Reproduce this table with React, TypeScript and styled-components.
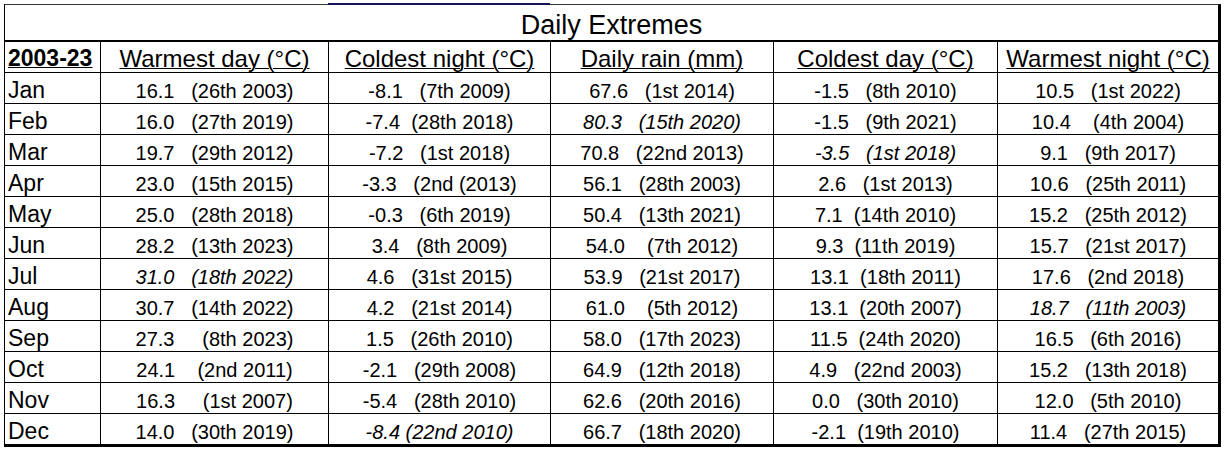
import React from 'react';
import styled, {createGlobalStyle} from "styled-components";

const GlobalStyle = createGlobalStyle`
    body {
        margin: 0;
        background: #fff;
        color: #000;
        font-family: "Liberation Sans", Arial, sans-serif;
    }
`

const TableStyled = styled.div`
    display: grid;
    grid-template-columns: 95px 228px 222px 223px 224px 221px;
    width: 1217px;
    margin: 4px 0 0 4px;
    box-sizing: border-box;
    border-left: 1px solid #000;
    border-top: 1px solid #333;
    border-right: 3px solid #000;
    border-bottom: 2px solid #000;
`
const TitleCell = styled.div`
    grid-column: 1 / -1;
    position: relative;
    height: 37px;
    box-sizing: border-box;
    border-bottom: 2px solid #000;
    padding-top: 2px;
    font-size: 27px;
    line-height: 36px;
    text-align: center;

    // the dark blue strip sitting on the top edge
    &::before {
        content: "";
        position: absolute;
        top: -2px;
        left: 323px;
        width: 222px;
        height: 2px;
        background: #14145a;
    }
`
const Cell = styled.div<{ $first?: boolean }>`
    height: 31px;
    box-sizing: border-box;
    border-bottom: 1px solid #000;
    border-left: ${({$first}) => ($first ? "none" : "1px solid #000")};
    overflow: hidden;
`
const HeadCell = styled(Cell)`
    line-height: 31px;
    padding-top: 1px;
    text-align: ${({$first}) => ($first ? "left" : "center")};
    padding-left: ${({$first}) => ($first ? "3px" : "0")};
    font-size: ${({$first}) => ($first ? "23px" : "24px")};
    font-weight: ${({$first}) => ($first ? 700 : 400)};

    span {
        text-decoration: underline;
        text-decoration-thickness: 1px;
    }
`
const MonthCell = styled(Cell)`
    font-size: 23px;
    line-height: 31px;
    padding: 2px 0 0 3px;
`
const ValueCell = styled(Cell)<{ $italic?: boolean }>`
    font-size: 20px;
    line-height: 31px;
    padding-top: 3px;
    text-align: center;
    white-space: pre;
    font-style: ${({$italic}) => ($italic ? "italic" : "normal")};
`

type Entry = [string, boolean?]

const headers = ["Warmest day (°C)", "Coldest night (°C)", "Daily rain (mm)", "Coldest day (°C)", "Warmest night (°C)"]

const rows: { month: string, cells: Entry[] }[] = [
    {month: "Jan", cells: [["16.1   (26th 2003)"], ["-8.1   (7th 2009)"], ["67.6   (1st 2014)"], ["-1.5   (8th 2010)"], ["10.5   (1st 2022)"]]},
    {month: "Feb", cells: [["16.0   (27th 2019)"], ["-7.4  (28th 2018)"], ["80.3   (15th 2020)", true], ["-1.5   (9th 2021)"], ["10.4    (4th 2004)"]]},
    {month: "Mar", cells: [["19.7   (29th 2012)"], ["-7.2   (1st 2018)"], ["70.8   (22nd 2013)"], ["-3.5   (1st 2018)", true], ["9.1   (9th 2017)"]]},
    {month: "Apr", cells: [["23.0   (15th 2015)"], ["-3.3   (2nd (2013)"], ["56.1   (28th 2003)"], ["2.6   (1st 2013)"], ["10.6   (25th 2011)"]]},
    {month: "May", cells: [["25.0   (28th 2018)"], ["-0.3   (6th 2019)"], ["50.4   (13th 2021)"], ["7.1  (14th 2010)"], ["15.2   (25th 2012)"]]},
    {month: "Jun", cells: [["28.2   (13th 2023)"], ["3.4   (8th 2009)"], ["54.0    (7th 2012)"], ["9.3  (11th 2019)"], ["15.7   (21st 2017)"]]},
    {month: "Jul", cells: [["31.0   (18th 2022)", true], ["4.6   (31st 2015)"], ["53.9   (21st 2017)"], ["13.1  (18th 2011)"], ["17.6   (2nd 2018)"]]},
    {month: "Aug", cells: [["30.7   (14th 2022)"], ["4.2   (21st 2014)"], ["61.0    (5th 2012)"], ["13.1  (20th 2007)"], ["18.7   (11th 2003)", true]]},
    {month: "Sep", cells: [["27.3     (8th 2023)"], ["1.5   (26th 2010)"], ["58.0   (17th 2023)"], ["11.5  (24th 2020)"], ["16.5   (6th 2016)"]]},
    {month: "Oct", cells: [["24.1    (2nd 2011)"], ["-2.1   (29th 2008)"], ["64.9   (12th 2018)"], ["4.9   (22nd 2003)"], ["15.2   (13th 2018)"]]},
    {month: "Nov", cells: [["16.3     (1st 2007)"], ["-5.4   (28th 2010)"], ["62.6   (20th 2016)"], ["0.0   (30th 2010)"], ["12.0   (5th 2010)"]]},
    {month: "Dec", cells: [["14.0   (30th 2019)"], ["-8.4 (22nd 2010)", true], ["66.7   (18th 2020)"], ["-2.1  (19th 2010)"], ["11.4   (27th 2015)"]]},
]

export default function App() {
    return (
        <>
            <GlobalStyle/>
            <TableStyled>
                <TitleCell>Daily Extremes</TitleCell>
                <HeadCell $first><span>2003-23</span></HeadCell>
                {headers.map((item, index) => (
                    <HeadCell key={index}><span>{item}</span></HeadCell>
                ))}
                {rows.map((row) => (
                    <React.Fragment key={row.month}>
                        <MonthCell $first>{row.month}</MonthCell>
                        {row.cells.map(([text, italic], index) => (
                            <ValueCell key={index} $italic={italic}>{text}</ValueCell>
                        ))}
                    </React.Fragment>
                ))}
            </TableStyled>
        </>
    )
}
